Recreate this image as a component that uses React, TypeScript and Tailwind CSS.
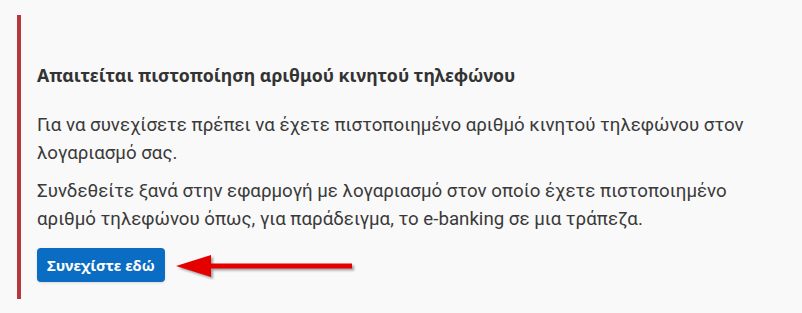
export default function App() {
  return (
    <div className="min-h-[313px] bg-[#f9f9f9] pt-[15px] pl-[17px] pr-[24px]">
      <div className="border-l-4 border-[#b5383c] pl-[16px] pt-[49px] pb-[17px] font-['Roboto',sans-serif] text-[#3a3a3a]">
        <h2 className="font-['Noto_Sans',sans-serif] text-[17.7px] font-bold leading-[22px] text-[#333]">
          Απαιτείται πιστοποίηση αριθμού κινητού τηλεφώνου
        </h2>
        <p className="mt-[25px] text-[18.7px] leading-[28px]">
          Για να συνεχίσετε πρέπει να έχετε πιστοποιημένο αριθμό κινητού τηλεφώνου στον
          λογαριασμό σας.
        </p>
        <p className="mt-[10px] text-[18.7px] leading-[28px]">
          Συνδεθείτε ξανά στην εφαρμογή με λογαριασμό στον οποίο έχετε πιστοποιημένο
          αριθμό τηλεφώνου όπως, για παράδειγμα, το e-banking σε μια τράπεζα.
        </p>
        <div className="mt-[15px] flex items-center">
          <button className="h-[34px] rounded-[4px] bg-[#0a6cc2] px-[10px] font-['Noto_Sans',sans-serif] text-[15px] font-bold text-white shadow-sm">
            Συνεχίστε εδώ
          </button>
          <svg
            width="182"
            height="30"
            viewBox="0 0 182 30"
            className="ml-[10px] drop-shadow-[2px_2px_1px_rgba(0,0,0,0.35)]"
          >
            <polygon points="1,16 36,5 36,27" fill="#e50000" />
            <rect x="34" y="13.5" width="143" height="5" fill="#e50000" />
          </svg>
        </div>
      </div>
    </div>
  );
}
